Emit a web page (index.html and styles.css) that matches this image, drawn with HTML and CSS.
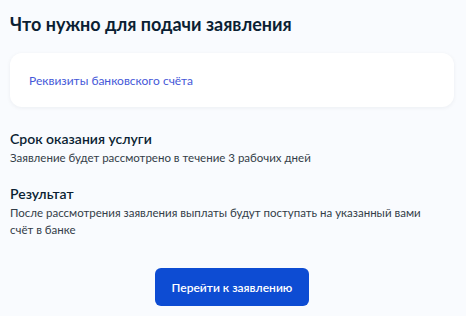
FILE: index.html
```html
<!DOCTYPE html>
<html lang="ru">
<head>
<meta charset="utf-8">
<link rel="stylesheet" href="styles.css">
</head>
<body>
<main class="page">
  <h2 class="title">Что нужно для подачи заявления</h2>
  <div class="card">
    <a class="link" href="#">Реквизиты банковского счёта</a>
  </div>
  <section class="info">
    <h3 class="info-title">Срок оказания услуги</h3>
    <p class="info-text">Заявление будет рассмотрено в течение 3 рабочих дней</p>
  </section>
  <section class="info">
    <h3 class="info-title">Результат</h3>
    <p class="info-text">После рассмотрения заявления выплаты будут поступать на указанный вами счёт в банке</p>
  </section>
  <div class="actions">
    <button class="btn">Перейти к заявлению</button>
  </div>
</main>
</body>
</html>
```
FILE: styles.css
```css
html, body {
  margin: 0;
  padding: 0;
  background: #f9fbfe;
  font-family: Lato, "Noto Sans", sans-serif;
  color: #0b1f33;
}
.page {
  padding: 12px 12px 0 10px;
  display: flex;
  flex-direction: column;
}
.title {
  margin: 0;
  font-size: 18px;
  line-height: 24px;
  font-weight: 700;
  color: #0b1f33;
}
.card {
  margin-top: 17px;
  height: 54px;
  background: #fff;
  border-radius: 12px;
  box-shadow: 0 1px 4px rgba(11, 31, 51, 0.06);
  display: flex;
  align-items: center;
  padding-left: 19px;
}
.link {
  font-size: 12px;
  color: #4558d8;
  text-decoration: none;
}
.info {
  margin-top: 22px;
}
.info + .info {
  margin-top: 18px;
}
.info-title {
  margin: 0;
  font-size: 14px;
  line-height: 20px;
  font-weight: 600;
}
.info-text {
  margin: 0;
  font-size: 11.5px;
  line-height: 17px;
  color: #333d48;
  max-width: 432px;
}
.actions {
  display: flex;
  justify-content: center;
  margin-top: 30px;
}
.btn {
  width: 154px;
  height: 38px;
  border: none;
  border-radius: 6px;
  background: #0d4cd3;
  color: #fff;
  font-family: inherit;
  font-size: 12px;
  font-weight: 600;
}
```
